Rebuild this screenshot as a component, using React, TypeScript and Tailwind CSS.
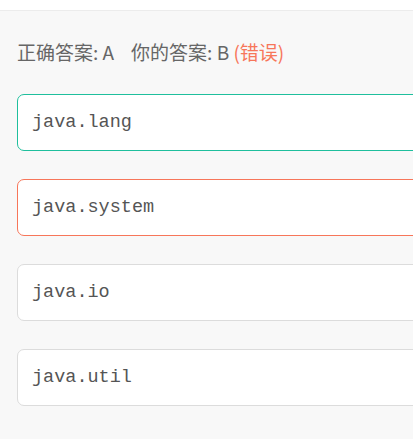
import React from "react";

const options = [
  { text: "java.lang", state: "right" },
  { text: "java.system", state: "wrong" },
  { text: "java.io", state: "none" },
  { text: "java.util", state: "none" },
];

const borderFor: Record<string, string> = {
  right: "border-[#1fbf9d]",
  wrong: "border-[#f7765a]",
  none: "border-[#dcdcdc]",
};

const App = () => {
  return (
    <div className="w-[413px] h-[439px] overflow-hidden bg-[#f8f8f8]">
      <div className="h-[11px] bg-white border-b border-[#ececec]" />
      <div className="pl-[17px] pt-[28px]">
        <p
          className="text-[19px] leading-[26px] text-[#666666]"
          style={{ fontFamily: '"Noto Sans CJK SC", sans-serif' }}
        >
          正确答案: A<span className="ml-[17px]">你的答案: B</span>{" "}
          <span className="text-[#f7765a]">(错误)</span>
        </p>
        <div className="mt-[29px] flex flex-col gap-[28px] mr-[-30px]">
          {options.map((o) => (
            <div
              key={o.text}
              className={`h-[57px] flex items-center pl-[14px] bg-white border rounded-[7px] ${borderFor[o.state]}`}
            >
              <span
                className="text-[18.5px] text-[#555555]"
                style={{ fontFamily: '"Liberation Mono", monospace' }}
              >
                {o.text}
              </span>
            </div>
          ))}
        </div>
      </div>
    </div>
  );
};

export default App;
